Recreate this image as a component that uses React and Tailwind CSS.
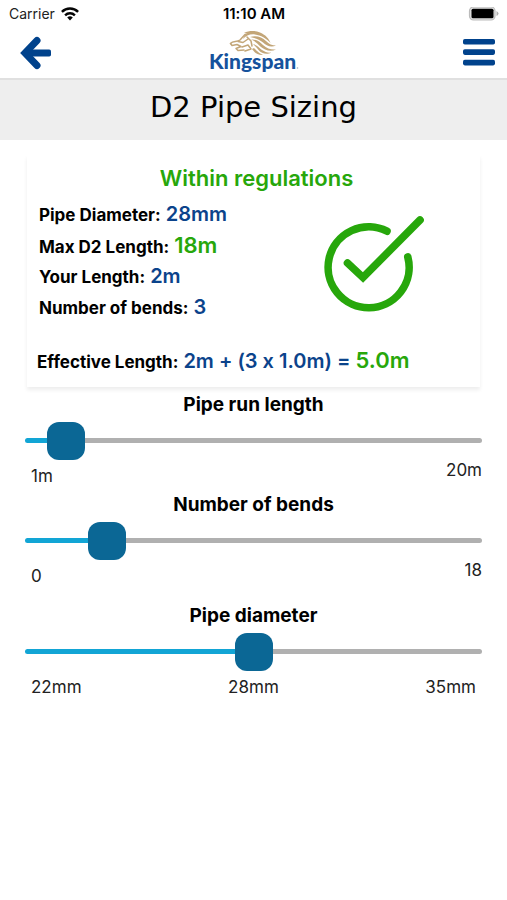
import { useState } from "react";

function StatusBar() {
  return (
    <div className="grid h-7 grid-cols-3 items-center pr-2 pl-[9px] text-sm leading-7 text-[#222]">
      <div className="flex items-center gap-[6px]">
        <span>Carrier</span>
        <svg className="h-[14px] w-[18px]" viewBox="0 0 18 14" aria-hidden="true">
          <g fill="none" stroke="#050505" strokeWidth="2.4">
            <path d="M0.9 4.9a11.5 11.5 0 0 1 16.2 0" />
            <path d="M4.1 8.3a7 7 0 0 1 9.8 0" />
          </g>
          <path d="M6.2 10.5a4 4 0 0 1 5.6 0L9 13.5z" fill="#050505" />
        </svg>
      </div>
      <span className="text-center text-[15px] font-semibold text-black">11:10 AM</span>
      <svg className="h-[15px] w-[31px] justify-self-end" viewBox="0 0 31 15" aria-hidden="true">
        <rect x="1.5" y="0" width="25.5" height="13" rx="4" fill="#e4e4e4" stroke="#bbb" strokeWidth="1.2" />
        <rect x="3.5" y="1.8" width="22" height="9.4" rx="1.5" fill="#000" />
        <path d="M28.5 4v5q2-1 2-2.5t-2-2.5z" fill="#b0b0b0" />
      </svg>
    </div>
  );
}

function Logo() {
  return (
    <svg className="h-[46px] w-[90px]" viewBox="0 0 90 46" role="img" aria-label="Kingspan">
      <g fill="#c3a678">
        <path d="M35 3C40 .5 46 .5 51 2.500C57 5 60 9 61.500 13C57 8 52 5.500 46 4.500C41 3.700 37 6 34 9C34.500 6 37 4 40 3Z" />
        <path d="M41 7C47 5 53 7 57 11C60 14 63 15.500 67 15.500C62 18 57 15.500 54 12.500C50 9 46 8 41 7Z" />
        <path d="M42 9.500C47 9 51 12 54 15C58 18.500 62 20 67 19.500C61 22.500 55 19.500 52 17C48 13.500 46 11 42 9.500Z" />
        <path d="M44 14C48 15 50 18 53 20C56 22 59 23 62 22.500C58 25.500 52 23 50 20.500C48 18 46 16 44 14Z" />
        <path d="M45 18C47 20 49 22.500 54 25C49 25.500 45 22 43 19Z" />
      </g>
      <g fill="none" stroke="#c3a678" strokeLinecap="round" strokeLinejoin="round" strokeWidth="1.500">
        <path d="M21.500 13.500C24 10.500 28 12.500 31 10L36 4.500L43 2.500" />
        <path d="M21.500 13.500L23 15.500L28 14.500L32 16.500L27 18.500L29 20.500L35 20" />
        <path d="M29 11.500L34 12.500L39 9" />
        <path d="M33 17L39 15L42 19L36 21" />
        <path d="M38 7L42 11L43 16" />
      </g>
      <text x="0" y="39" fill="#16529c" className="font-['Lato','Open_Sans',sans-serif] text-[21px] font-black">
        Kingspan
      </text>
      <circle cx="88.500" cy="38" r="0.8" fill="#9aa9bd" />
    </svg>
  );
}

function Header() {
  return (
    <header className="flex h-[52px] items-center justify-between border-b-2 border-[#e0e0e0] pr-3 pl-5">
      <button type="button" aria-label="Back" className="flex w-8 cursor-pointer">
        <svg className="h-[34px] w-8" viewBox="0 0 32 34" aria-hidden="true">
          <path d="M17 4.5L5 17L17 29.5" fill="none" stroke="#00428c" strokeWidth="7" strokeLinecap="round" />
          <rect x="5" y="13.4" width="26" height="7.2" rx="1.8" fill="#00428c" />
        </svg>
      </button>
      <Logo />
      <button type="button" aria-label="Menu" className="flex w-10 cursor-pointer justify-end">
        <svg className="h-7 w-8" viewBox="0 0 32 28" fill="#00428c" aria-hidden="true">
          <rect y="0" width="32" height="5.6" rx="1.8" />
          <rect y="10.3" width="32" height="5.6" rx="1.8" />
          <rect y="20.8" width="32" height="5.6" rx="1.8" />
        </svg>
      </button>
    </header>
  );
}

function Row({ label, value, good }) {
  return (
    <div className="flex h-[31px] items-baseline gap-[5px]">
      <dt className="text-[17px] leading-[30px] font-bold">{label}</dt>
      <dd className={good ? "text-[22px] leading-[30px] text-[#27a70b]" : "text-[20px] leading-[30px] text-[#0b438b]"}>{value}</dd>
    </div>
  );
}

function Summary({ length, bends, diameter }) {
  return (
    <section className="mx-[27px] mt-[15px] h-[232px] bg-white px-[10px] pt-[7px] font-semibold shadow-[0_3px_4px_rgba(0,0,0,0.07)]">
      <h2 className="pl-[6px] text-center text-[22px] leading-8 text-[#27a70b]">Within regulations</h2>
      <div className="flex justify-between pt-[5px] pl-[2px]">
        <dl>
          <Row label="Pipe Diameter:" value={`${diameter}mm`} />
          <Row label="Max D2 Length:" value="18m" good />
          <Row label="Your Length:" value={`${length}m`} />
          <Row label="Number of bends:" value={bends} />
        </dl>
        <svg className="mt-4 mr-[46px] h-[98px] w-[100px]" viewBox="0 0 100 98" fill="none" stroke="#27a70b" strokeWidth="7.6" strokeLinecap="round" role="img" aria-label="OK">
          <path d="M63 16.2A40.5 40.5 0 1 0 83.8 42" />
          <path d="M23.5 48L39 62.5L96 5" />
        </svg>
      </div>
      <p className="mt-[22px] flex items-baseline gap-[5px] leading-[30px] text-[#0b438b]">
        <span className="text-[17px] font-bold text-black">Effective Length:</span>
        <span className="text-[20px]">{`${length}m + (${bends} x 1.0m) =`}</span>
        <span className="text-[22px] text-[#27a70b]">{`${(length + bends).toFixed(1)}m`}</span>
      </p>
    </section>
  );
}

function Slider({ id, label, min, max, value, onChange }) {
  const percent = ((value - min) / (max - min)) * 100;
  return (
    <>
      <label htmlFor={id} className="block text-center text-[19px] leading-7 font-bold text-black">
        {label}
      </label>
      <input
        id={id}
        type="range"
        min={min}
        max={max}
        value={value}
        onChange={(e) => onChange(Number(e.target.value))}
        style={{ "--fill": `${percent}%` }}
        className="mt-[2px] block h-[38px] w-full cursor-pointer appearance-none bg-transparent [&::-webkit-slider-runnable-track]:h-[5px] [&::-webkit-slider-runnable-track]:rounded-full [&::-webkit-slider-runnable-track]:bg-[linear-gradient(to_right,#12a5d5_var(--fill),#b0b0b0_var(--fill))] [&::-webkit-slider-thumb]:-mt-4 [&::-webkit-slider-thumb]:size-[38px] [&::-webkit-slider-thumb]:appearance-none [&::-webkit-slider-thumb]:rounded-xl [&::-webkit-slider-thumb]:bg-[#0b6795]"
      />
    </>
  );
}

const diameters = [22, 28, 35];

export default function App() {
  const [length, setLength] = useState(2);
  const [bends, setBends] = useState(3);
  const [size, setSize] = useState(1);

  return (
    <div className="min-h-screen bg-white font-['Inter','Liberation_Sans',sans-serif] text-black [font-feature-settings:'calt'_0]">
      <StatusBar />
      <Header />
      <h1 className="h-[60px] bg-[#eeeeee] text-center font-['DejaVu_Sans',sans-serif] text-[29px] leading-[54px]">D2 Pipe Sizing</h1>
      <main>
        <Summary length={length} bends={bends} diameter={diameters[size]} />
        <div className="px-[25px] pt-1 text-[17px] leading-[22px] text-[#222]">
          <div className="h-[100px]">
            <Slider id="run" label="Pipe run length" min={1} max={20} value={length} onChange={setLength} />
            <div className="flex justify-between pl-[6px]">
              <span className="pt-[6px]">1m</span>
              <span>20m</span>
            </div>
          </div>
          <div className="h-[111px]">
            <Slider id="bends" label="Number of bends" min={0} max={20} value={bends} onChange={setBends} />
            <div className="flex justify-between pl-[6px]">
              <span className="pt-[6px]">0</span>
              <span>18</span>
            </div>
          </div>
          <div>
            <Slider id="diameter" label="Pipe diameter" min={0} max={2} value={size} onChange={setSize} />
            <div className="flex justify-between px-[6px] pt-[6px]">
              {diameters.map((d) => (
                <span key={d}>{d}mm</span>
              ))}
            </div>
          </div>
        </div>
      </main>
    </div>
  );
}
